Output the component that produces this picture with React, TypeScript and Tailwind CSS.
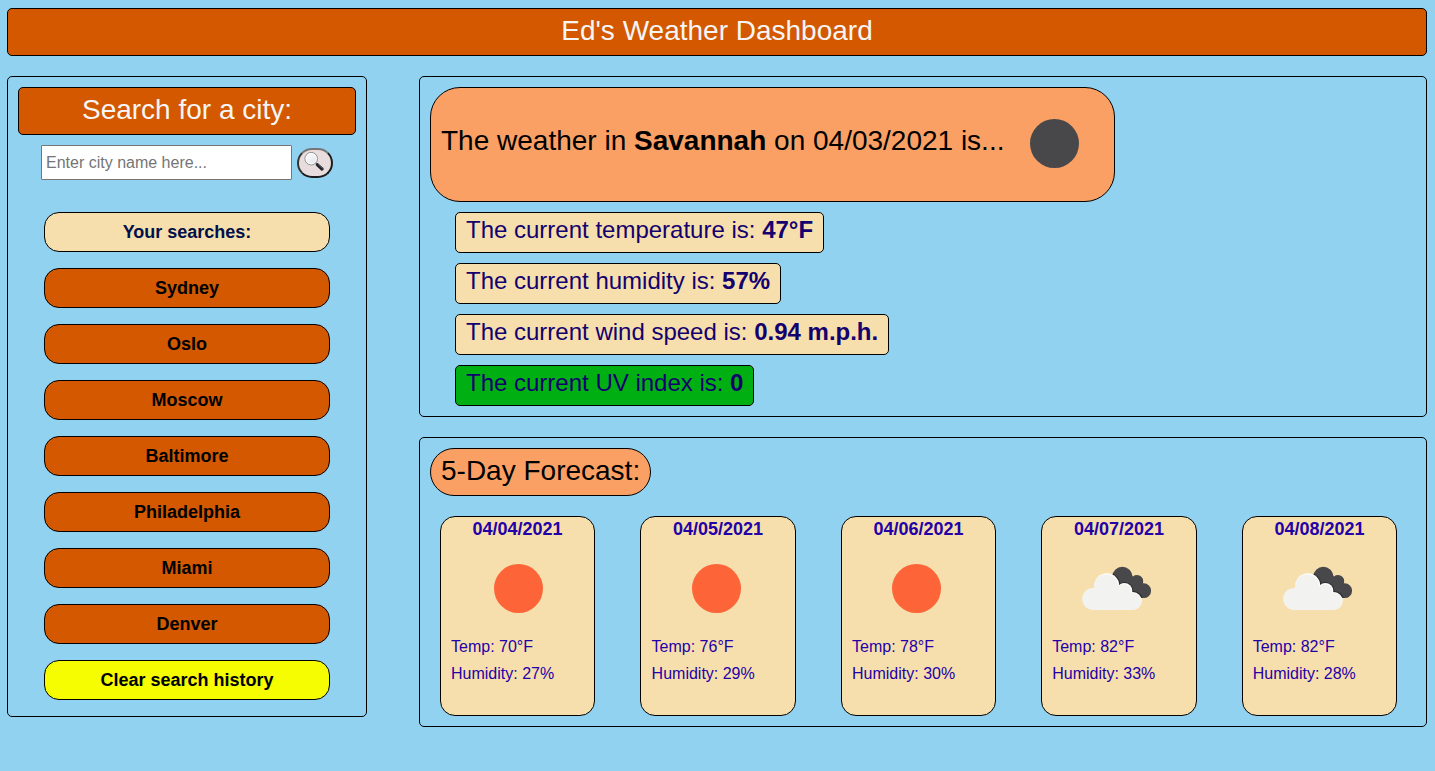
import React from "react";

const cities = ["Sydney", "Oslo", "Moscow", "Baltimore", "Philadelphia", "Miami", "Denver"];

const stats = [
  { label: "The current temperature is:", value: "47°F", tone: "bg-[#f6dfac]" },
  { label: "The current humidity is:", value: "57%", tone: "bg-[#f6dfac]" },
  { label: "The current wind speed is:", value: "0.94 m.p.h.", tone: "bg-[#f6dfac]" },
  { label: "The current UV index is:", value: "0", tone: "bg-[#00b012]" },
];

const days = [
  { date: "04/04/2021", icon: "sun", temp: 70, humidity: 27, width: "w-[155px]", gap: "mr-[45px]", shift: "ml-[27px]", pad: "pl-[10px]" },
  { date: "04/05/2021", icon: "sun", temp: 76, humidity: 29, width: "w-[156px]", gap: "mr-[45px]", shift: "ml-[25px]", pad: "pl-[10.6px]" },
  { date: "04/06/2021", icon: "sun", temp: 78, humidity: 30, width: "w-[155px]", gap: "mr-[45px]", shift: "ml-[24px]", pad: "pl-[10px]" },
  { date: "04/07/2021", icon: "cloud", temp: 82, humidity: 33, width: "w-[156px]", gap: "mr-[45px]", shift: "ml-[24px]", pad: "pl-[10.2px]" },
  { date: "04/08/2021", icon: "cloud", temp: 82, humidity: 28, width: "w-[155px]", gap: "", shift: "ml-[24px]", pad: "pl-[9.7px]" },
];

function Disc({ className }: { className: string }) {
  return (
    <svg viewBox="0 0 100 100" className={className}>
      <circle cx="50.5" cy="50.5" r="24.5" fill="currentColor" />
    </svg>
  );
}

function Clouds({ className }: { className: string }) {
  return (
    <svg viewBox="0 0 100 100" className={className}>
      <defs>
        <clipPath id="back-cloud">
          <circle cx="56.4" cy="39" r="10.2" />
          <circle cx="71" cy="43.2" r="6.2" />
          <circle cx="77.7" cy="52.7" r="7.4" />
          <path d="M48 44 L65 36 L74 47 L79 59.9 H60 Z" />
        </clipPath>
      </defs>
      <g clipPath="url(#back-cloud)">
        <rect x="40" y="20" width="50" height="50" fill="#48484a" />
        <g fill="none" stroke="#2c2c2f" strokeWidth="2">
          <circle cx="40.8" cy="47.6" r="12.6" />
          <circle cx="58.4" cy="52.9" r="8" />
          <circle cx="67.3" cy="63" r="8.9" />
        </g>
      </g>
      <g fill="#fff">
        <circle cx="40.8" cy="47.6" r="12.4" />
        <circle cx="58.4" cy="52.9" r="7.9" />
        <circle cx="67" cy="62.8" r="8.7" />
      </g>
      <g fill="#f2f2f0">
        <circle cx="40.1" cy="48.2" r="12" />
        <circle cx="57.6" cy="53.9" r="7.6" />
        <circle cx="66.6" cy="63.4" r="8.5" />
        <circle cx="27.2" cy="60.9" r="11" />
        <path d="M27 49.9 L45 42 L60 55 L67 71.9 H27 Z" />
      </g>
    </svg>
  );
}

function Magnifier() {
  return (
    <svg viewBox="0 0 20 20" className="-ml-[2px] h-5 w-5">
      <defs>
        <linearGradient id="lens" x1="0" y1="0" x2="1" y2="1">
          <stop offset="0" stopColor="#ffffff" />
          <stop offset="1" stopColor="#dfe1e6" />
        </linearGradient>
      </defs>
      <path d="M11.5 11 L14 13.5" stroke="#777" strokeWidth="1.6" />
      <path d="M13.5 12.8 L18 17" stroke="#202226" strokeWidth="3.2" strokeLinecap="round" />
      <path d="M14.2 12.4 L18.3 16.3" stroke="#6c7077" strokeWidth="0.7" strokeLinecap="round" />
      <circle cx="7.2" cy="6.7" r="6.3" fill="url(#lens)" stroke="#8e8f94" strokeWidth="1" />
      <circle cx="7.2" cy="6.7" r="5.1" fill="none" stroke="#fff" strokeWidth="0.8" />
    </svg>
  );
}

export default function App() {
  const row = "block h-10 w-full rounded-[15px] border border-black text-center text-[18px] leading-[38px] font-bold";
  return (
    <div className="min-h-[771px] bg-[#90d2f0] pt-2 pr-2 pl-[7px] text-black [font-family:'Liberation_Sans',Arial,sans-serif]">
      <header className="h-12 rounded-[5px] border border-black bg-[#d35800] text-center text-[28px] leading-[43px] text-[#f5f5f5]">
        Ed's Weather Dashboard
      </header>

      <div className="mt-5 flex items-start justify-between">
        <aside className="h-[641px] w-[360px] rounded-[5px] border border-black p-[10px]">
          <h2 className="h-12 rounded-[5px] border border-black bg-[#d35800] text-center text-[28px] leading-[43px] text-[#f5f5f5]">
            Search for a city:
          </h2>
          <div className="mt-[10px] ml-[23px] flex items-center gap-[5px]">
            <input
              placeholder="Enter city name here..."
              className="h-[35px] w-[251px] rounded-[1px] border border-[#767676] bg-white px-1 text-[16px] placeholder:text-[#757575]"
            />
            <button className="flex h-[30px] w-9 items-start justify-center rounded-[15px] border-2 border-t-[#767676] border-r-[#1c1c1c] border-b-[#1c1c1c] border-l-[#333] bg-[#e9dcdc] pt-[2px]">
              <Magnifier />
            </button>
          </div>
          <div className="mt-8 ml-[26px] flex w-[286px] flex-col gap-4">
            <div className={row + " bg-[#f6dfac] text-[#00104a]"}>Your searches:</div>
            {cities.map((city) => (
              <button key={city} className={row + " bg-[#d35800]"}>
                {city}
              </button>
            ))}
            <button className={row + " bg-[#f5fd00]"}>Clear search history</button>
          </div>
        </aside>

        <main className="w-[1008px]">
          <section className="h-[341px] rounded-[5px] border border-black p-[10px]">
            <div className="flex h-[115px] w-[685px] items-center justify-between rounded-[30px] border border-black bg-[#faa065] px-[10px]">
              <h1 className="-mt-[7px] text-[28px] leading-8 whitespace-nowrap">
                The weather in <b>Savannah</b> on 04/03/2021 is...
              </h1>
              <Disc className="-mt-[4px] h-[100px] w-[100px] shrink-0 text-[#48484a]" />
            </div>
            <div className="mt-[10px] ml-[25px] flex flex-col items-start gap-[10px]">
              {stats.map((s) => (
                <p
                  key={s.label}
                  className={"h-[41px] rounded-[5px] border border-black px-[10px] text-[24px] leading-[34px] text-[#13006e] " + s.tone}
                >
                  {s.label} <b>{s.value}</b>
                </p>
              ))}
            </div>
          </section>

          <section className="mt-5 h-[290px] rounded-[5px] border border-black p-[10px]">
            <h2 className="h-12 w-[221px] rounded-[25px] border border-black bg-[#faa065] px-[10px] text-[28px] leading-[43px] whitespace-nowrap">
              5-Day Forecast:
            </h2>
            <div className="mt-5 ml-[10px] flex">
              {days.map((d) => (
                <article
                  key={d.date}
                  className={"h-[200px] shrink-0 rounded-[15px] border border-black bg-[#f6dfac] text-[16px] text-[#2400a8] " + d.width + " " + d.gap}
                >
                  <h3 className="h-[21px] pt-[2px] text-center text-[18px] leading-[21px] font-bold">{d.date}</h3>
                  {d.icon === "sun" ? (
                    <Disc className={"h-[100px] w-[100px] text-[#fd6438] " + d.shift} />
                  ) : (
                    <Clouds className={"h-[100px] w-[100px] " + d.shift} />
                  )}
                  <p className={"leading-[18px] " + d.pad}>Temp: {d.temp}°F</p>
                  <p className={"mt-[9px] leading-[18px] " + d.pad}>Humidity: {d.humidity}%</p>
                </article>
              ))}
            </div>
          </section>
        </main>
      </div>
    </div>
  );
}
